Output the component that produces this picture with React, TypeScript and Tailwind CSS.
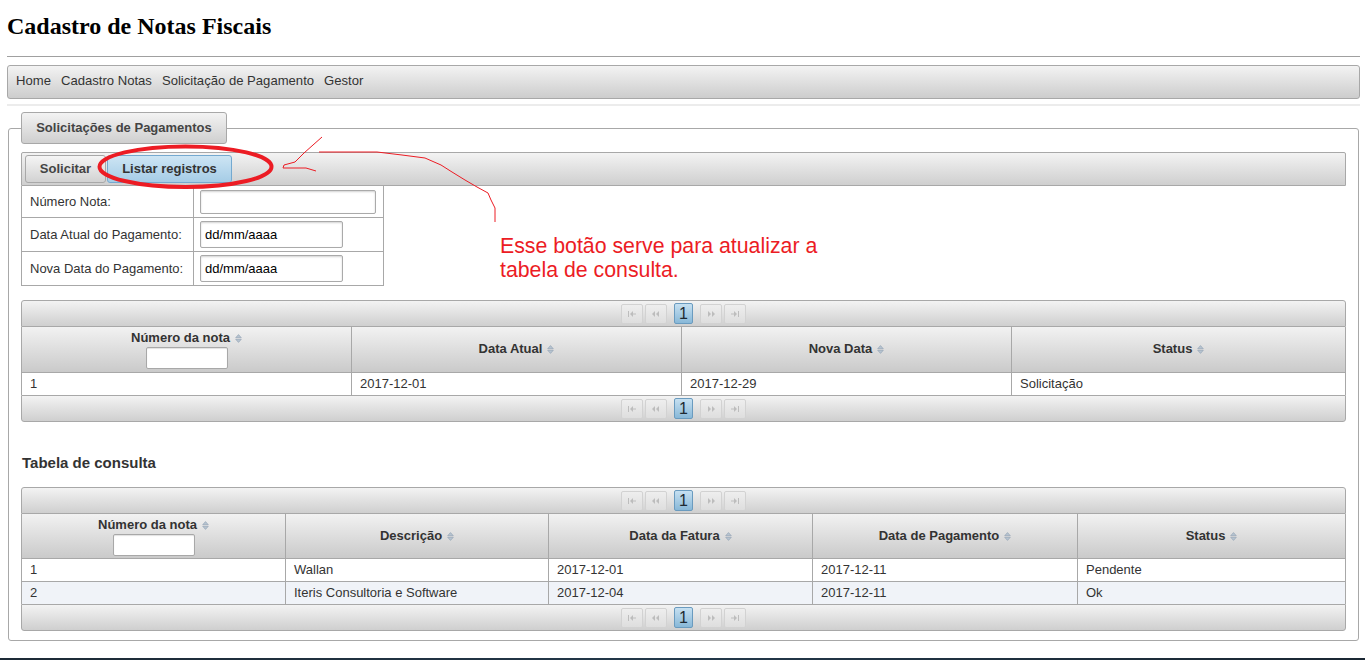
import React from "react";

function SortIcon() {
  return (
    <svg width="7" height="9" viewBox="0 0 7 9" className="inline-block ml-[5px] align-[-1px]">
      <path d="M3.5 0.6 L6.3 3.7 H0.7 Z" fill="#b7c4d1" stroke="#8d9db0" strokeWidth="0.6" />
      <path d="M3.5 8.4 L6.3 5.3 H0.7 Z" fill="#b7c4d1" stroke="#8d9db0" strokeWidth="0.6" />
    </svg>
  );
}

function PgIcon({ kind }: { kind: "first" | "prev" | "next" | "last" }) {
  const c = "#bdbdbd";
  return (
    <svg width="10" height="6" viewBox="0 0 10 6">
      {kind === "first" && (
        <>
          <rect x="1" y="0" width="1" height="6" fill={c} />
          <path d="M6 0 L3 3 L6 6 Z" fill={c} />
          <rect x="6" y="2.5" width="3" height="1" fill={c} />
        </>
      )}
      {kind === "prev" && (
        <>
          <path d="M4 0 L1 3 L4 6 Z" fill={c} />
          <path d="M8 0 L5 3 L8 6 Z" fill={c} />
        </>
      )}
      {kind === "next" && (
        <>
          <path d="M2 0 L5 3 L2 6 Z" fill={c} />
          <path d="M6 0 L9 3 L6 6 Z" fill={c} />
        </>
      )}
      {kind === "last" && (
        <>
          <rect x="1" y="2.5" width="3" height="1" fill={c} />
          <path d="M4 0 L7 3 L4 6 Z" fill={c} />
          <rect x="8" y="0" width="1" height="6" fill={c} />
        </>
      )}
    </svg>
  );
}

function DisabledBtn({ kind }: { kind: "first" | "prev" | "next" | "last" }) {
  return (
    <div className="w-[22px] h-[20px] border border-[#d2d2d2] rounded-[2px] bg-linear-to-b from-[#eeeeee] to-[#dedede] flex items-center justify-center">
      <PgIcon kind={kind} />
    </div>
  );
}

function Paginator({ top }: { top?: boolean }) {
  return (
    <div
      className={
        top
          ? "h-[27px] border border-[#a8a8a8] rounded-t-[3px] bg-linear-to-b from-[#f3f3f3] to-[#cfcfcf] flex items-center justify-center"
          : "h-[27px] border border-[#a8a8a8] rounded-b-[3px] bg-linear-to-b from-[#f3f3f3] to-[#cfcfcf] flex items-center justify-center"
      }
    >
      <DisabledBtn kind="first" />
      <div className="w-[2px]" />
      <DisabledBtn kind="prev" />
      <div className="w-[7px]" />
      <div className="w-[19px] h-[21px] border border-[#6a9bbf] rounded-[2px] bg-linear-to-b from-[#c6e0f1] to-[#88b8d8] text-[16px] leading-none text-[#1e2a33] flex items-center justify-center">
        1
      </div>
      <div className="w-[7px]" />
      <DisabledBtn kind="next" />
      <div className="w-[2px]" />
      <DisabledBtn kind="last" />
    </div>
  );
}

function FilterInput() {
  return <div className="w-[82px] h-[22px] mt-[1px] border border-[#a8a8a8] rounded-[2px] bg-white shadow-[inset_0_1px_1px_rgba(0,0,0,0.12)]" />;
}

function HeadCell({ label, last, filter, h }: { label: string; last?: boolean; filter?: boolean; h: string }) {
  const base = last
    ? "border-b border-[#a8a8a8] bg-linear-to-b from-[#f2f2f2] to-[#cacaca] font-bold text-[#333]"
    : "border-b border-r border-[#a8a8a8] bg-linear-to-b from-[#f2f2f2] to-[#cacaca] font-bold text-[#333]";
  if (filter) {
    return (
      <div className={`${base} ${h} flex flex-col items-center pt-[3px]`}>
        <div className="leading-[16px]">
          {label}
          <SortIcon />
        </div>
        <FilterInput />
      </div>
    );
  }
  return (
    <div className={`${base} ${h} flex items-center justify-center pb-[1px]`}>
      <span>
        {label}
        <SortIcon />
      </span>
    </div>
  );
}

function BodyCell({ text, last, bottom, alt }: { text: string; last?: boolean; bottom?: boolean; alt?: boolean }) {
  let cls = "h-[22px] leading-[21px] pl-[8px] text-[#333] whitespace-nowrap overflow-hidden";
  if (!last) cls += " border-r border-[#a8a8a8]";
  if (bottom) cls += " border-b border-b-[#a8a8a8] h-[23px]";
  cls += alt ? " bg-[#f0f3f8]" : " bg-white";
  return <div className={cls}>{text}</div>;
}

export default function App() {
  return (
    <div className="w-[1365px] h-[660px] bg-white relative overflow-hidden font-['Liberation_Sans',Arial,sans-serif] text-[13px] text-[#333]">
      {/* Title */}
      <h1 className="pl-[7px] pt-[12px] font-['Liberation_Serif','Times_New_Roman',serif] font-bold text-[24px] leading-[28px] text-black">
        Cadastro de Notas Fiscais
      </h1>
      <div className="ml-[7px] w-[1353px] mt-[16px] border-t border-[#a0a0a0]" />

      {/* Menubar */}
      <div className="ml-[7px] w-[1353px] mt-[8px] h-[34px] border border-[#a8a8a8] rounded-[3px] bg-linear-to-b from-[#f3f3f3] to-[#cdcdcd] flex items-center pl-[8px] pb-[2px] gap-[10px] text-[13.1px] text-[#333]">
        <span>Home</span>
        <span>Cadastro Notas</span>
        <span>Solicitação de Pagamento</span>
        <span>Gestor</span>
      </div>
      <div className="ml-[7px] w-[1353px] mt-[5px] h-[2px] bg-[#ececec]" />

      {/* Panel */}
      <div className="ml-[8px] w-[1351px] mt-[6px]">
        <div className="relative z-10 ml-[13px] w-[206px] h-[32px] border border-[#a8a8a8] rounded-[3px] bg-linear-to-b from-[#f3f3f3] to-[#cfcfcf] flex items-center justify-center font-bold text-[#444]">
          Solicitações de Pagamentos
        </div>
        <div className="-mt-[16px] border border-[#a8a8a8] rounded-[3px] pt-[23px] pl-[12px] pr-[12px] pb-[9px]">
          {/* Toolbar */}
          <div className="h-[34px] border border-[#a8a8a8] rounded-t-[2px] bg-linear-to-b from-[#f3f3f3] to-[#cfcfcf] flex items-start pt-[2px] pl-[3px] gap-[1px]">
            <div className="w-[81px] h-[28px] border border-[#a8a8a8] rounded-[3px] bg-linear-to-b from-[#f5f5f5] to-[#d2d2d2] flex items-center justify-center font-bold text-[#444]">
              Solicitar
            </div>
            <div className="w-[125px] h-[28px] border border-[#74a9d0] rounded-[3px] bg-linear-to-b from-[#cde5f4] to-[#a5cce6] flex items-center justify-center font-bold text-[#333]">
              Listar registros
            </div>
          </div>

          {/* Form */}
          <div className="w-[363px] border-x border-b border-[#a8a8a8] grid grid-cols-[172px_1fr]">
            <div className="h-[32px] border-r border-b border-[#a8a8a8] pl-[8px] flex items-center">Número Nota:</div>
            <div className="h-[32px] border-b border-[#a8a8a8] pl-[6px] flex items-center">
              <div className="w-[176px] h-[24px] border border-[#aaa] rounded-[2px] bg-white shadow-[inset_0_1px_2px_rgba(0,0,0,0.18)]" />
            </div>
            <div className="h-[34px] border-r border-b border-[#a8a8a8] pl-[8px] flex items-center">Data Atual do Pagamento:</div>
            <div className="h-[34px] border-b border-[#a8a8a8] pl-[6px] flex items-center">
              <div className="w-[143px] h-[27px] border border-[#aaa] rounded-[2px] bg-white shadow-[inset_0_1px_2px_rgba(0,0,0,0.18)] flex items-center pl-[4px] text-black">
                dd/mm/aaaa
              </div>
            </div>
            <div className="h-[33px] border-r border-[#a8a8a8] pl-[8px] flex items-center">Nova Data do Pagamento:</div>
            <div className="h-[33px] pl-[6px] flex items-center">
              <div className="w-[143px] h-[27px] border border-[#aaa] rounded-[2px] bg-white shadow-[inset_0_1px_2px_rgba(0,0,0,0.18)] flex items-center pl-[4px] text-black">
                dd/mm/aaaa
              </div>
            </div>
          </div>

          {/* Table 1 */}
          <div className="mt-[14px]">
            <Paginator top />
            <div className="border-x border-[#a8a8a8] grid grid-cols-[330px_330px_330px_1fr]">
              <HeadCell label="Número da nota" filter h="h-[46px]" />
              <HeadCell label="Data Atual" h="h-[46px]" />
              <HeadCell label="Nova Data" h="h-[46px]" />
              <HeadCell label="Status" last h="h-[46px]" />
              <BodyCell text="1" />
              <BodyCell text="2017-12-01" />
              <BodyCell text="2017-12-29" />
              <BodyCell text="Solicitação" last />
            </div>
            <Paginator />
          </div>

          <div className="mt-[30px] mb-[15px] h-[20px] leading-[21px] pl-[1px] font-bold text-[15px] text-[#333]">
            Tabela de consulta
          </div>

          {/* Table 2 */}
          <div>
            <Paginator top />
            <div className="border-x border-[#a8a8a8] grid grid-cols-[264px_263px_264px_265px_1fr]">
              <HeadCell label="Número da nota" filter h="h-[45px]" />
              <HeadCell label="Descrição" h="h-[45px]" />
              <HeadCell label="Data da Fatura" h="h-[45px]" />
              <HeadCell label="Data de Pagamento" h="h-[45px]" />
              <HeadCell label="Status" last h="h-[45px]" />
              <BodyCell text="1" bottom />
              <BodyCell text="Wallan" bottom />
              <BodyCell text="2017-12-01" bottom />
              <BodyCell text="2017-12-11" bottom />
              <BodyCell text="Pendente" last bottom />
              <BodyCell text="2" alt />
              <BodyCell text="Iteris Consultoria e Software" alt />
              <BodyCell text="2017-12-04" alt />
              <BodyCell text="2017-12-11" alt />
              <BodyCell text="Ok" last alt />
            </div>
            <Paginator />
          </div>
        </div>
      </div>

      <div className="mt-[17px] h-[2px] w-full bg-linear-to-r from-[#1d2a36] via-[#23384a] to-[#1a2733]" />

      {/* Annotations overlay */}
      <svg className="absolute left-0 top-0 pointer-events-none" width="1365" height="660" viewBox="0 0 1365 660">
        <ellipse cx="185.5" cy="166.7" rx="86" ry="20.3" fill="none" stroke="#ec1c24" strokeWidth="4" />
        <polyline
          points="322,137 313,145 304,153 295,162 284,165 283,168 306,168 316,171"
          fill="none"
          stroke="#ec1c24"
          strokeWidth="1"
        />
        <polyline
          points="319,152 377,152 402,155 425,158 441,165 452,172 465,180 477,187 488,193 491,200 495,208 495,222"
          fill="none"
          stroke="#ec1c24"
          strokeWidth="1"
        />
      </svg>
      <div className="absolute left-[500px] top-[234px] text-[21.3px] leading-[24px] text-[#ec1c24] font-['Liberation_Sans',Arial,sans-serif]">
        Esse botão serve para atualizar a
        <br />
        tabela de consulta.
      </div>
    </div>
  );
}
